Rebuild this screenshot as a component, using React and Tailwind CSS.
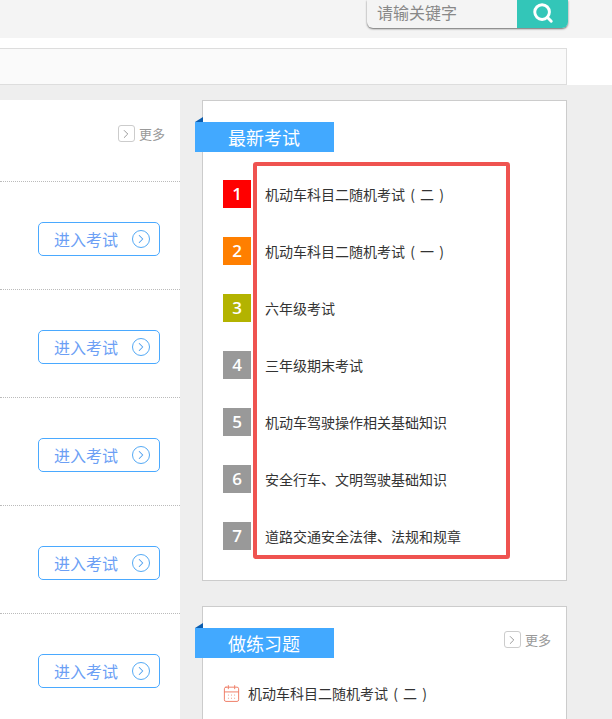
import React from "react";
import { Search, ChevronRight, CalendarDays } from "lucide-react";

const font = "font-['Noto_Sans_CJK_SC','Liberation_Sans',sans-serif]";

function More() {
  return (
    <div className="flex items-center gap-[4px] text-[13px] leading-none text-[#999]">
      <span className="flex h-[17px] w-[17px] items-center justify-center rounded-[3px] border border-[#ccc]">
        <ChevronRight size={14} strokeWidth={1.25} color="#777" />
      </span>
      <span>更多</span>
    </div>
  );
}

function Enter() {
  return (
    <div className="flex h-[34px] w-[122px] items-center rounded-[5px] border border-[#4aa9ff] pl-[15px] text-[16px] text-[#6c9ff5]">
      <span>进入考试</span>
      <span className="ml-[14px] flex h-[18px] w-[18px] items-center justify-center rounded-full border border-[#55aaf5]">
        <ChevronRight size={14} strokeWidth={1.75} color="#4f9fee" />
      </span>
    </div>
  );
}

function Tag({ title }) {
  return (
    <div className="relative ml-[-8px] flex h-[30px] w-[139px] items-center bg-[#42a9ff] pl-[33px] text-[18px] text-white">
      <span className="absolute left-0 top-[-5px] h-0 w-0 border-b-[5px] border-l-[8px] border-b-[#0b5cad] border-l-transparent" />
      {title}
    </div>
  );
}

const exams = [
  ["机动车科目二随机考试 ( 二 )", "bg-[#ff0000]"],
  ["机动车科目二随机考试 ( 一 )", "bg-[#ff7f00]"],
  ["六年级考试", "bg-[#b3b300]"],
  ["三年级期末考试", "bg-[#999999]"],
  ["机动车驾驶操作相关基础知识", "bg-[#999999]"],
  ["安全行车、文明驾驶基础知识", "bg-[#999999]"],
  ["道路交通安全法律、法规和规章", "bg-[#999999]"],
];

export default function App() {
  return (
    <div className={`relative h-[719px] w-[612px] overflow-hidden bg-[#eeeeee] ${font}`}>
      <div className="flex h-[38px] justify-end bg-[#f4f4f4] pr-[44px]">
        <div className="flex h-[28px] w-[201px] overflow-hidden rounded-b-[6px] bg-[#f4f4f4] shadow-[0_1px_2px_rgba(0,0,0,0.55)]">
          <div className="flex-1 pl-[10px] text-[16px] leading-[24px] text-[#888]">请输关键字</div>
          <div className="flex w-[51px] items-center justify-center bg-[#33c6b8] pb-[2px]">
            <Search size={22} strokeWidth={3.2} color="white" />
          </div>
        </div>
      </div>

      <div className="h-[47px] bg-white pt-[10px]">
        <div className="h-[37px] w-[567px] border border-l-0 border-[#dddddd] bg-[#fafafa]" />
      </div>

      <div className="flex pt-[15px]">
        <div className="h-[620px] w-[180px] bg-white">
          <div className="flex h-[82px] items-start justify-end border-b border-dotted border-[#bbb] pr-[15px] pt-[25px]">
            <More />
          </div>
          {[0, 1, 2, 3, 4].map((i) => (
            <div key={i} className="flex h-[108px] items-start border-b border-dotted border-[#bbb] pl-[38px] pt-[40px]">
              <Enter />
            </div>
          ))}
        </div>

        <div className="ml-[22px] w-[365px]">
          <div className="h-[481px] border border-[#cccccc] bg-white pt-[21px]">
            <Tag title="最新考试" />
            <div className="mt-[28px] pl-[20px]">
              {exams.map(([t, c], i) => (
                <div key={t} className="flex h-[57px] items-start">
                  <span className={`flex h-[28px] w-[28px] items-center justify-center text-[17px] font-semibold text-white font-['Open_Sans',sans-serif] ${c}`}>
                    {i + 1}
                  </span>
                  <span className="ml-[14px] mt-[3px] text-[14px] leading-[22px] text-[#333] [word-spacing:2px]">{t}</span>
                </div>
              ))}
            </div>
          </div>

          <div className="mt-[25px] h-[200px] border border-[#cccccc] bg-white pt-[21px]">
            <div className="flex items-start justify-between pr-[15px]">
              <Tag title="做练习题" />
              <div className="pt-[3px]"><More /></div>
            </div>
            <div className="mt-[24px] flex items-center pl-[19px] text-[14px] leading-[22px] text-[#333] [word-spacing:2px]">
              <CalendarDays size={19} strokeWidth={1.25} color="#ef8069" />
              <span className="ml-[7px]">机动车科目二随机考试 ( 二 )</span>
            </div>
          </div>
        </div>
      </div>

      <div className="absolute left-[253px] top-[162px] h-[397px] w-[257px] rounded-[3px] border-4 border-[#ef5350]" />
    </div>
  );
}
